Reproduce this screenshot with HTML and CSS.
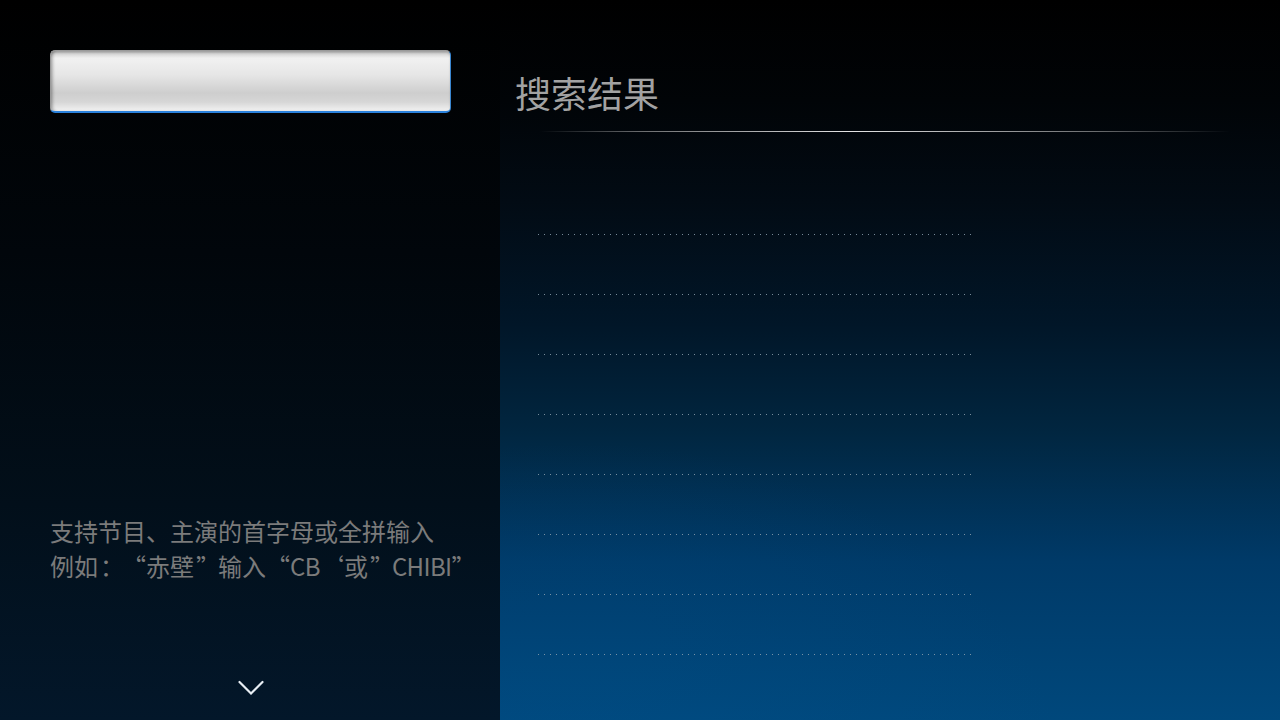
FILE: index.html
```html
<!DOCTYPE html>
<html lang="zh-CN">
<head>
<meta charset="utf-8">
<title>搜索</title>
<link rel="stylesheet" href="styles.css">
</head>
<body>
<div class="screen">
  <aside class="left">
    <div class="search-box"></div>
    <div class="hint">
      <p>支持节目、主演的首字母或全拼输入</p>
      <p>例如<span class="pl">：</span><span class="pr">“</span>赤壁<span class="pl">”</span>输入<span class="pr">“</span><span class="lat">CB</span><span class="pr">‘</span>或<span class="pl">”</span><span class="lat">CHIBI</span>”</p>
    </div>
    <div class="chevron">
      <svg width="26" height="16" viewBox="0 0 26 16"><path d="M1.5 2 L13 13.5 L24.5 2" fill="none" stroke="#e8eef4" stroke-width="2.2" stroke-linecap="round" stroke-linejoin="miter"/></svg>
    </div>
  </aside>
  <main class="right">
    <h1 class="title">搜索结果</h1>
    <div class="divider"></div>
    <ul class="results">
      <li class="row"></li>
      <li class="row"></li>
      <li class="row"></li>
      <li class="row"></li>
      <li class="row"></li>
      <li class="row"></li>
      <li class="row"></li>
      <li class="row"></li>
    </ul>
  </main>
</div>
</body>
</html>
```
FILE: styles.css
```css
* { box-sizing: border-box; }
html, body {
  margin: 0;
  padding: 0;
  width: 1280px;
  height: 720px;
  overflow: hidden;
  background: #000;
  font-family: "Noto Sans CJK SC", "Noto Sans", sans-serif;
}
.screen {
  display: flex;
  width: 1280px;
  height: 720px;
}
.left {
  width: 500px;
  height: 720px;
  display: flex;
  flex-direction: column;
  padding: 50px 49px 0 50px;
  background: linear-gradient(to bottom, #000000 0%, #01060b 35%, #020f1a 70%, #03172a 100%);
}
.search-box {
  width: 401px;
  height: 63px;
  border-radius: 5px;
  border: 1px solid #9a9a9a;
  border-bottom: 2px solid #2b82dc;
  border-right: 1px solid #3a86d0;
  background: linear-gradient(to bottom, #c4c4c4 0%, #f1f1f1 12%, #e6e6e6 40%, #cecece 70%, #d6d6d6 85%, #f2f2f2 100%);
  box-shadow: inset 3px 0 3px -1px rgba(0,0,0,0.25), inset 0 2px 2px rgba(0,0,0,0.15);
}
.hint {
  margin-top: auto;
  color: #7b7b7b;
  font-size: 24px;
  line-height: 35px;
}
.hint p {
  margin: 0;
  white-space: nowrap;
}
.lat { letter-spacing: -0.6px; }
.pl, .pr {
  display: inline-block;
  width: 1em;
}
.pl { text-align: left; padding-left: 2px; }
.pr { text-align: right; padding-right: 2px; }
.chevron {
  height: 40px;
  margin-top: 97px;
  display: flex;
  justify-content: center;
}
.chevron svg { display: block; margin-left: 1px; }
.right {
  flex: 1;
  height: 720px;
  padding: 67px 0 0 15px;
  background:
    radial-gradient(ellipse 700px 500px at 10% 110%, rgba(0, 80, 140, 0.35), rgba(0,0,0,0) 70%),
    linear-gradient(to bottom, #000000 0%, #010407 14%, #020b14 28%, #011628 45%, #012640 60%, #003a68 78%, #00487c 100%);
}
.title {
  margin: 0;
  font-size: 36px;
  line-height: 50px;
  font-weight: 400;
  color: #a2a2a2;
}
.divider {
  height: 1px;
  margin: 14px 50px 0 25px;
  background: linear-gradient(to right, rgba(255,255,255,0) 0%, rgba(180,180,180,0.6) 15%, rgba(240,240,240,0.95) 45%, rgba(180,180,180,0.6) 80%, rgba(255,255,255,0) 100%);
}
.results {
  list-style: none;
  margin: 43px 0 0 23px;
  padding: 0;
  width: 436px;
}
.row {
  height: 60px;
  background-image: linear-gradient(to right, rgba(140,160,175,0.85) 1px, transparent 1px);
  background-size: 6px 1px;
  background-repeat: repeat-x;
  background-position: 0 bottom;
}
```
